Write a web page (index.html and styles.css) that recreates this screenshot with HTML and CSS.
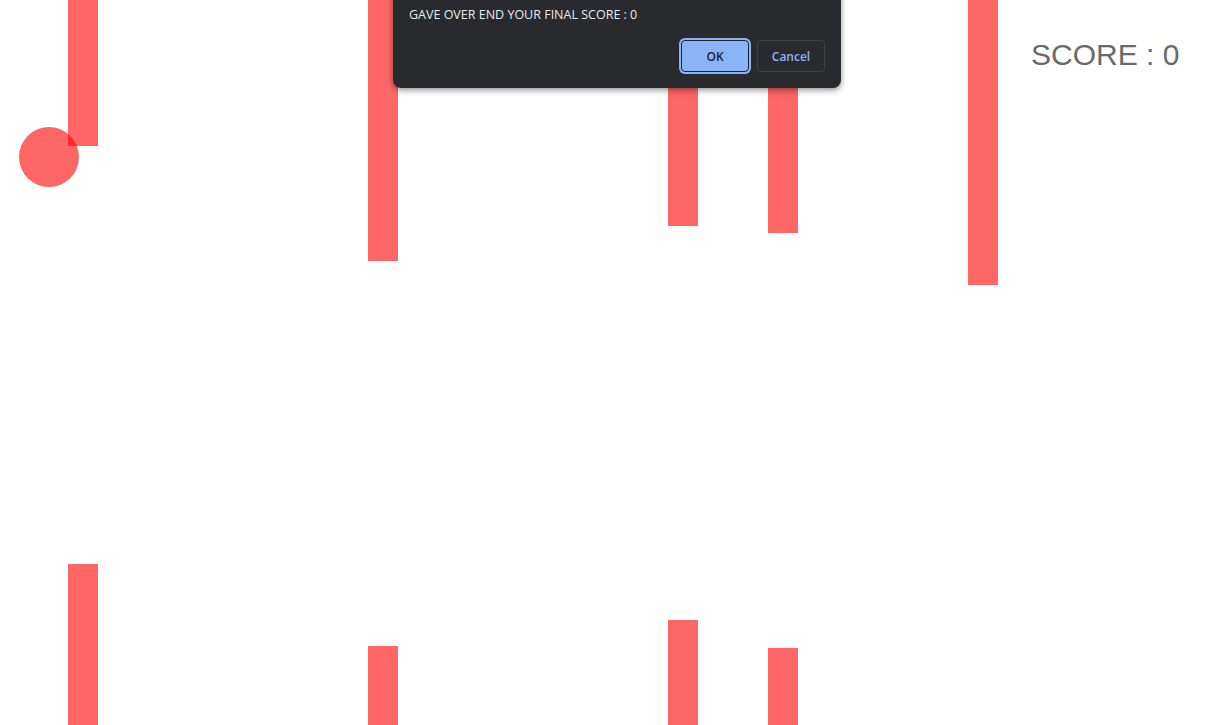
FILE: index.html
```html
<!DOCTYPE html>
<html>
<head>
<meta charset="utf-8">
<link rel="stylesheet" href="styles.css">
</head>
<body>
<div class="game">
  <div class="pipe top p1"></div>
  <div class="pipe top p2"></div>
  <div class="pipe top p3"></div>
  <div class="pipe top p4"></div>
  <div class="pipe top p5"></div>
  <div class="pipe bottom b1"></div>
  <div class="pipe bottom b2"></div>
  <div class="pipe bottom b3"></div>
  <div class="pipe bottom b4"></div>
  <div class="ball"></div>
  <div class="score">SCORE : 0</div>
</div>
<div class="dialog">
  <div class="message">GAVE OVER END YOUR FINAL SCORE : 0</div>
  <div class="buttons">
    <button class="btn ok">OK</button>
    <button class="btn cancel">Cancel</button>
  </div>
</div>
</body>
</html>
```
FILE: styles.css
```css
html, body {
  margin: 0;
  padding: 0;
  background: #fff;
  overflow: hidden;
}
.game {
  position: relative;
  width: 1223px;
  height: 725px;
}
.pipe {
  position: absolute;
  width: 30px;
  background: rgba(255, 0, 0, 0.6);
}
.top { top: 0; }
.bottom { bottom: 0; }
.p1 { left: 68px; height: 146px; }
.p2 { left: 368px; height: 261px; }
.p3 { left: 668px; height: 226px; }
.p4 { left: 768px; height: 233px; }
.p5 { left: 968px; height: 285px; }
.b1 { left: 68px; height: 161px; }
.b2 { left: 368px; height: 79px; }
.b3 { left: 668px; height: 105px; }
.b4 { left: 768px; height: 77px; }
.ball {
  position: absolute;
  left: 19px;
  top: 127px;
  width: 60px;
  height: 60px;
  border-radius: 50%;
  background: rgba(255, 0, 0, 0.6);
}
.score {
  position: absolute;
  left: 1031px;
  top: 37px;
  font-family: "Liberation Sans", Arial, sans-serif;
  font-size: 30px;
  line-height: 36px;
  color: #6a6a6a;
  white-space: nowrap;
}
.dialog {
  position: absolute;
  left: 393px;
  top: -10px;
  width: 448px;
  height: 98px;
  background: #292a2d;
  border-radius: 0 0 8px 8px;
  box-shadow: 0 2px 6px rgba(0, 0, 0, 0.45);
  box-sizing: border-box;
  padding: 16px 16px 0 16px;
  font-family: "Open Sans", "Noto Sans", sans-serif;
  display: flex;
  flex-direction: column;
}
.message {
  color: #e8eaed;
  font-size: 12.5px;
  line-height: 18px;
}
.buttons {
  display: flex;
  justify-content: flex-end;
  gap: 8px;
  margin-top: 16px;
}
.btn {
  width: 68px;
  height: 32px;
  border-radius: 4px;
  font-family: "Open Sans", "Noto Sans", sans-serif;
  font-size: 12px;
  font-weight: 600;
  padding: 0;
  box-sizing: border-box;
}
.ok {
  background: #8ab4f8;
  color: #202124;
  border: 1px solid #202124;
  box-shadow: 0 0 0 2px #8ab4f8;
}
.cancel {
  background: #292a2d;
  color: #8ab4f8;
  border: 1px solid #3c4043;
}
```
